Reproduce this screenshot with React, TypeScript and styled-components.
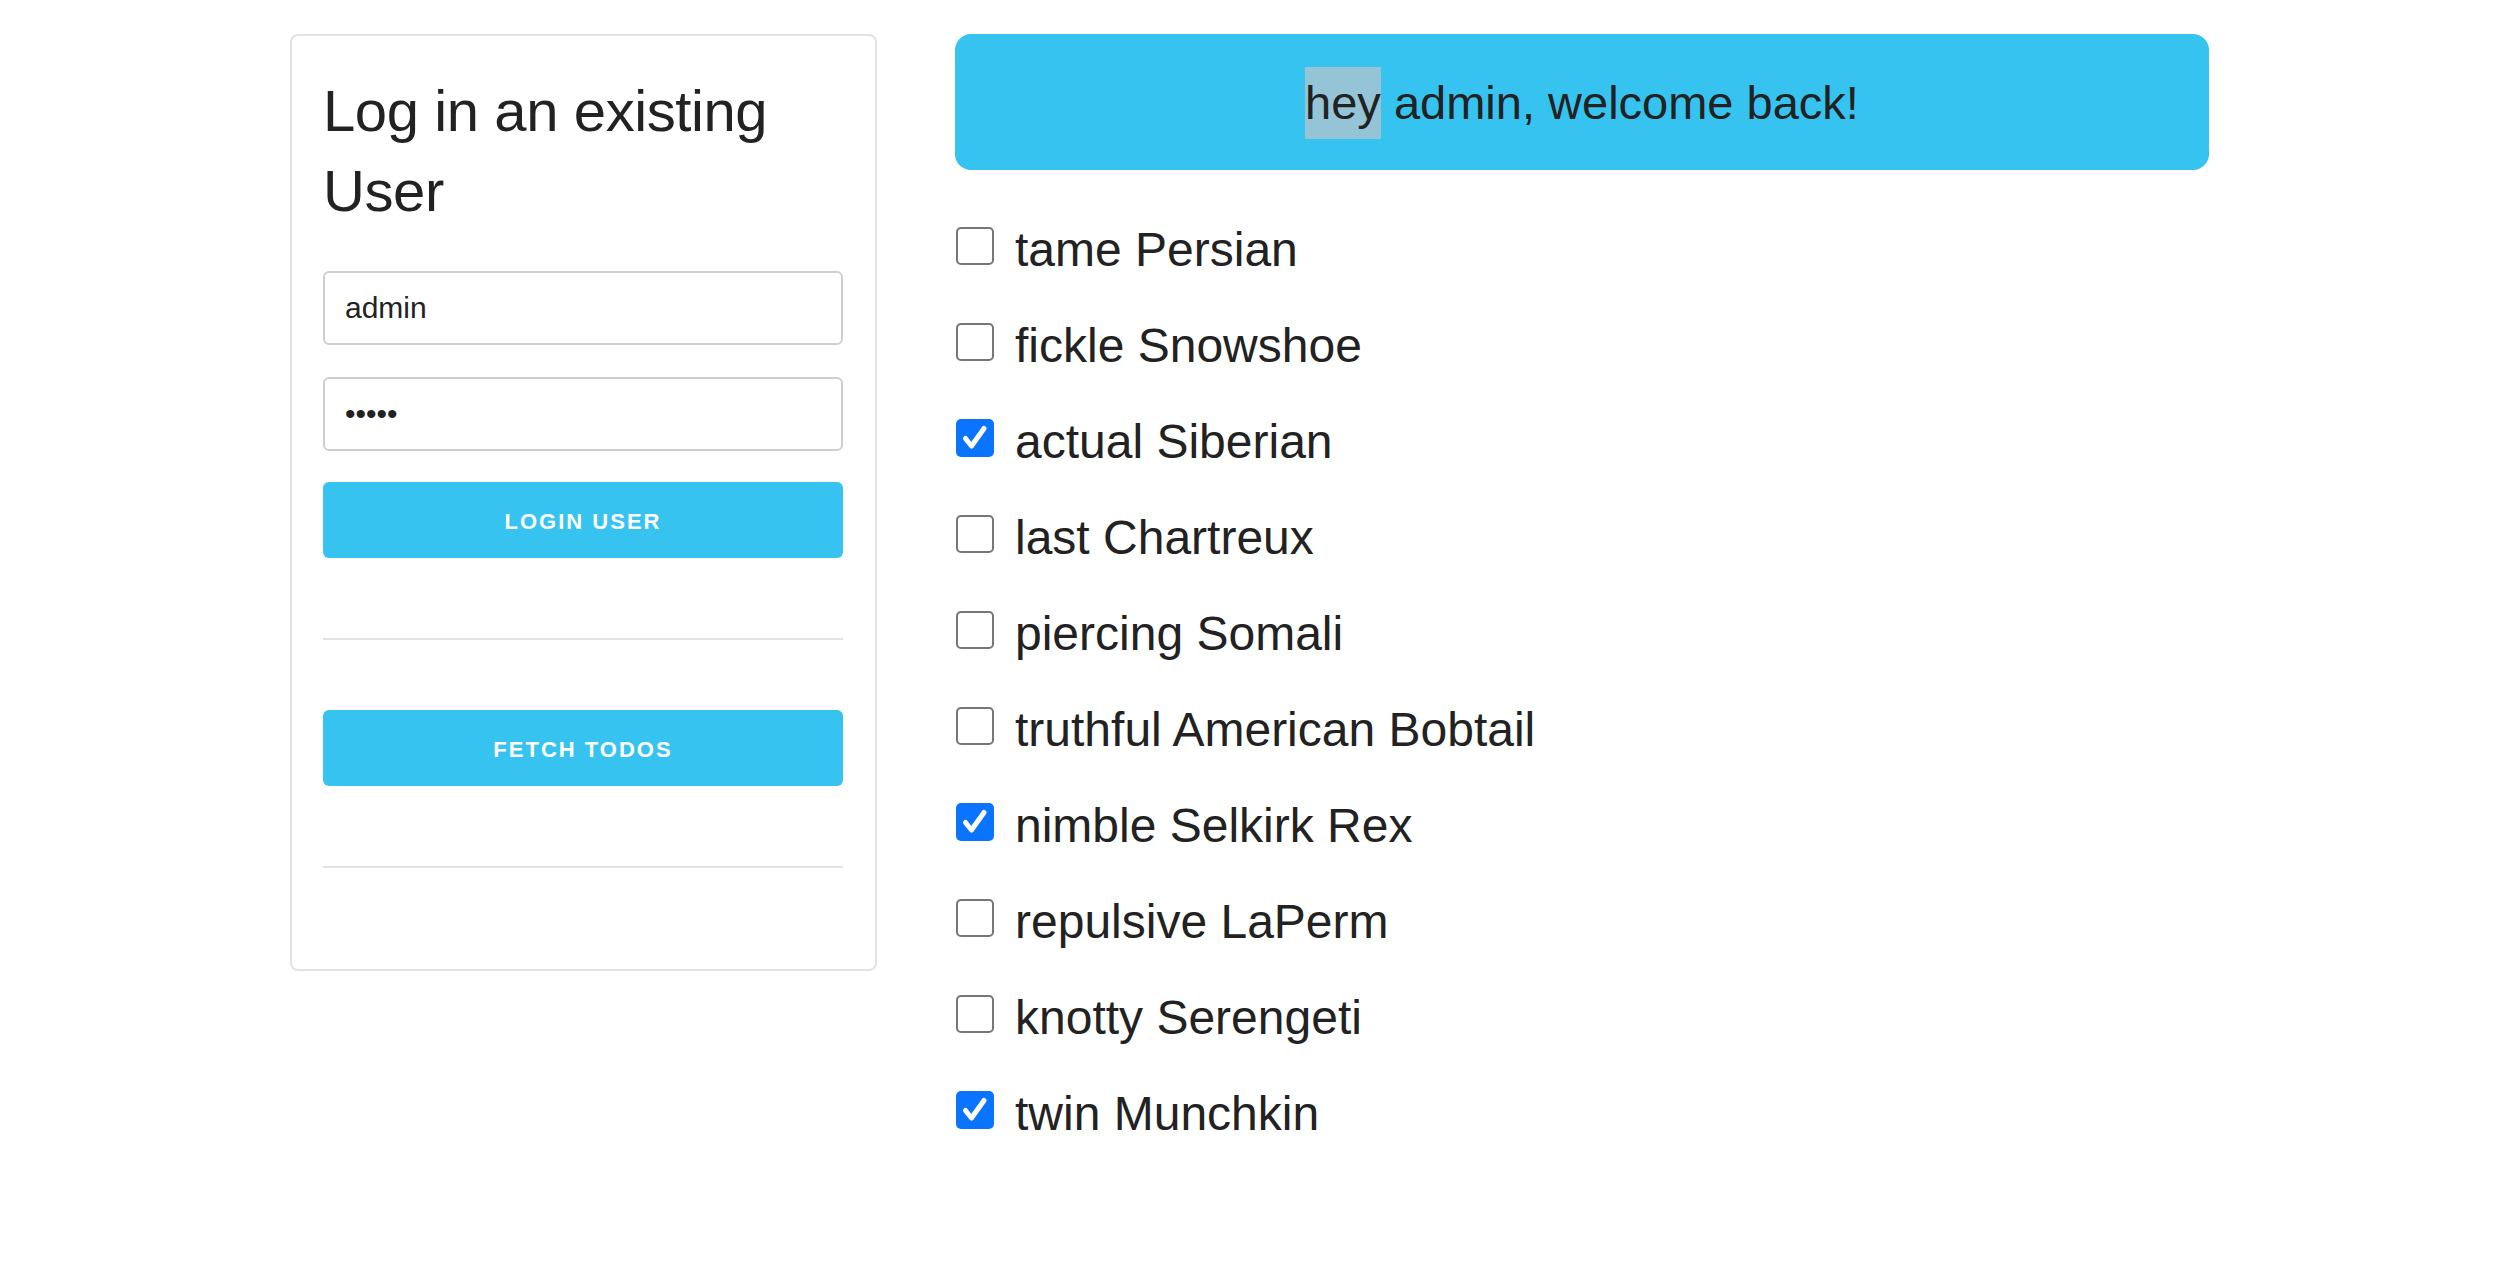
import React, { FC } from "react";
import styled, { createGlobalStyle } from "styled-components";

const GlobalStyle = createGlobalStyle`
    *, *::before, *::after {
        box-sizing: border-box;
    }
    html, body {
        margin: 0;
        padding: 0;
        background: #fff;
    }
    body {
        font-family: "Liberation Sans", Arial, Helvetica, sans-serif;
        color: #222;
    }
`;

const Page = styled.div`
    display: grid;
    grid-template-columns: 587px 1254px;
    column-gap: 78px;
    align-items: start;
    padding: 34px 0 0 290px;
`;

const Card = styled.div`
    width: 587px;
    border: 2px solid #e2e2e2;
    border-radius: 8px;
    padding: 35px 32px 101px 31px;
    display: flex;
    flex-direction: column;
`;

const Title = styled.h1`
    margin: 0 0 40px;
    font-size: 58px;
    line-height: 80px;
    font-weight: 400;
    letter-spacing: -0.4px;
    color: #222;
`;

const Input = styled.input<{ $gap?: number }>`
    height: 74px;
    width: 100%;
    margin: 0 0 ${(p) => p.$gap ?? 0}px;
    padding: 0 20px;
    border: 2px solid #cfcfcf;
    border-radius: 6px;
    font-family: "Liberation Sans", Arial, sans-serif;
    font-size: 30px;
    color: #222;
    background: #fff;
    outline: none;
`;

const ActionButton = styled.button`
    height: 76px;
    width: 100%;
    padding: 4px 0 0;
    border: none;
    border-radius: 6px;
    background: #36c3f0;
    color: #fff;
    font-family: "Liberation Sans", Arial, sans-serif;
    font-weight: 700;
    font-size: 22px;
    letter-spacing: 2px;
    text-transform: uppercase;
    cursor: pointer;
`;

const Divider = styled.hr<{ $top: number; $bottom: number }>`
    border: none;
    height: 2px;
    background: #e2e2e2;
    margin: ${(p) => p.$top}px 0 ${(p) => p.$bottom}px;
`;

const Main = styled.div`
    display: flex;
    flex-direction: column;
`;

const Banner = styled.div`
    height: 136px;
    padding-top: 2px;
    border-radius: 16px;
    background: #36c3f0;
    display: flex;
    align-items: center;
    justify-content: center;
    font-size: 47px;
    line-height: 72px;
    color: #222;
`;

const Highlight = styled.span`
    display: inline-block;
    background: #94c4d6;
    line-height: 72px;
`;

const TodoList = styled.ul`
    list-style: none;
    margin: 28px 0 0;
    padding: 0;
`;

const TodoRow = styled.li`
    display: flex;
    align-items: center;
    height: 96px;
`;

const Box = styled.span<{ $checked: boolean }>`
    flex: 0 0 38px;
    width: 38px;
    height: 38px;
    margin-left: 1px;
    border-radius: 5px;
    border: ${(p) => (p.$checked ? "none" : "2px solid #767676")};
    background: ${(p) => (p.$checked ? "#0a74ff" : "#fff")};
    display: flex;
    align-items: center;
    justify-content: center;
`;

const TodoText = styled.span`
    margin-left: 21px;
    padding-top: 6px;
    font-size: 48px;
    color: #222;
`;

const todos = [
    { name: "tame Persian", done: false },
    { name: "fickle Snowshoe", done: false },
    { name: "actual Siberian", done: true },
    { name: "last Chartreux", done: false },
    { name: "piercing Somali", done: false },
    { name: "truthful American Bobtail", done: false },
    { name: "nimble Selkirk Rex", done: true },
    { name: "repulsive LaPerm", done: false },
    { name: "knotty Serengeti", done: false },
    { name: "twin Munchkin", done: true },
];

const Check: FC = () => (
    <svg width="38" height="38" viewBox="0 0 38 38">
        <path
            d="M9.5 19.5 L15.5 27 L28 9.5"
            fill="none"
            stroke="#fff"
            strokeWidth="5"
            strokeLinecap="round"
            strokeLinejoin="round"
        />
    </svg>
);

const App: FC = () => {
    return (
        <React.Fragment>
            <GlobalStyle />
            <Page>
                <Card>
                    <Title>Log in an existing User</Title>
                    <Input type="text" defaultValue="admin" $gap={32} />
                    <Input type="password" defaultValue="admin" $gap={31} />
                    <ActionButton>Login User</ActionButton>
                    <Divider $top={80} $bottom={70} />
                    <ActionButton>Fetch Todos</ActionButton>
                    <Divider $top={80} $bottom={0} />
                </Card>
                <Main>
                    <Banner>
                        <span>
                            <Highlight>hey</Highlight> admin, welcome back!
                        </span>
                    </Banner>
                    <TodoList>
                        {todos.map((todo) => (
                            <TodoRow key={todo.name}>
                                <Box $checked={todo.done}>
                                    {todo.done && <Check />}
                                </Box>
                                <TodoText>{todo.name}</TodoText>
                            </TodoRow>
                        ))}
                    </TodoList>
                </Main>
            </Page>
        </React.Fragment>
    );
};

export default App;
